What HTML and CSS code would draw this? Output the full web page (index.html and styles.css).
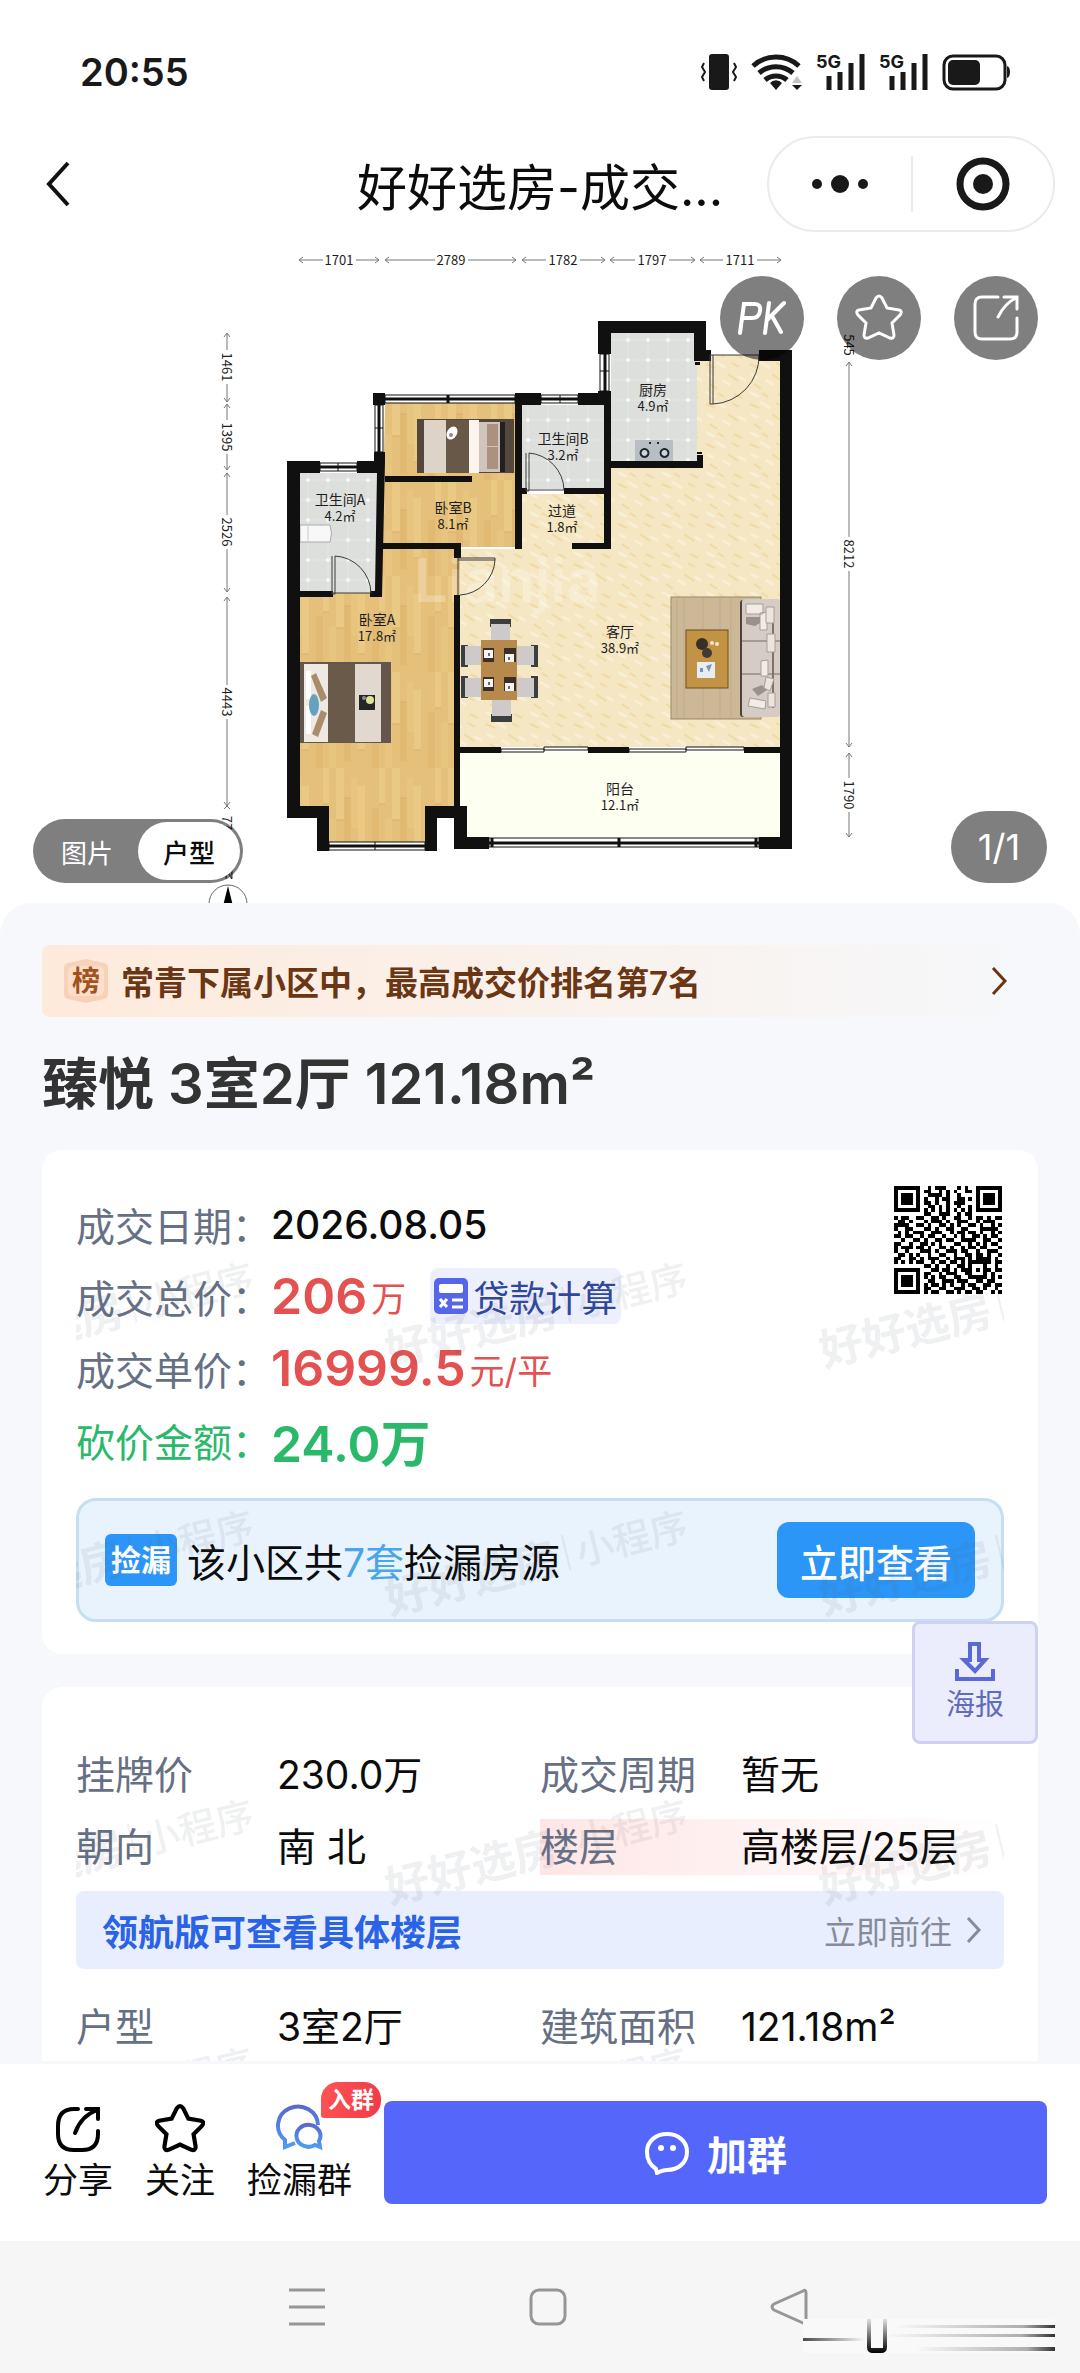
FILE: index.html
```html
<!DOCTYPE html>
<html lang="zh-CN">

<head>
    <meta charset="UTF-8">
    <meta name="viewport" content="width=device-width, initial-scale=1.0">
    <title>好好选房-成交详情</title>
    <link rel="stylesheet" href="styles.css">
</head>

<body>
    <div class="status-bar">
        <span class="clock">20:55</span>
        <div class="status-icons">
            <svg width="38" height="38" viewBox="0 0 38 38" fill="none" stroke="#191919" stroke-width="3">
                <rect x="9" y="1" width="20" height="36" rx="3" fill="#191919" stroke="none" />
                <rect x="15" y="31" width="8" height="3" fill="#fff" />
                <path d="M4 10l-2 4 3 5-3 5 2 4M34 10l2 4-3 5 3 5-2 4" stroke-width="2" />
            </svg>
            <svg width="52" height="38" viewBox="0 0 52 38" fill="none" stroke="#191919" stroke-width="5">
                <path d="M2 13a34 34 0 0 1 46 0M8 20a26 26 0 0 1 34 0M14 27a17 17 0 0 1 22 0" />
                <path d="M25 37l-6-7a8 8 0 0 1 12 0z" fill="#191919" stroke="none" />
                <path d="M46 23l5 7H41z" fill="#c4c4c4" stroke="none" />
                <path d="M46 37l5-5H41z" fill="#191919" stroke="none" />
            </svg>
            <svg class="signal" width="50" height="38" viewBox="0 0 50 38">
                <text x="0" y="15">5G</text>
                <path d="M13 23v14M24 19v18M35 10v27M46 1v36" />
            </svg>
            <svg class="signal" width="50" height="38" viewBox="0 0 50 38">
                <text x="0" y="15">5G</text>
                <path d="M13 23v14M24 19v18M35 10v27M46 1v36" />
            </svg>
            <svg width="68" height="38" viewBox="0 0 68 38">
                <rect x="2" y="3" width="61" height="33" rx="9" fill="none" stroke="#191919" stroke-width="3" />
                <rect x="6" y="7" width="32" height="25" rx="5" fill="#191919" />
                <path d="M65 13q3 1 3 6t-3 6z" fill="#191919" />
            </svg>
        </div>
    </div>

    <header class="navbar">
        <button class="back" aria-label="返回">
            <svg width="26" height="46" viewBox="0 0 26 46" fill="none" stroke="#111" stroke-width="4">
                <path d="M23 2L4 23l19 21" />
            </svg>
        </button>
        <h1 class="page-name">好好选房-成交...</h1>
        <div class="capsule">
            <button aria-label="更多">
                <svg width="60" height="24" viewBox="0 0 60 24" fill="#191919">
                    <circle cx="7" cy="12" r="5" />
                    <circle cx="30" cy="12" r="9" />
                    <circle cx="53" cy="12" r="5" />
                </svg>
            </button>
            <button aria-label="关闭">
                <svg width="54" height="54" viewBox="0 0 54 54">
                    <circle cx="27" cy="27" r="23" fill="none" stroke="#191919" stroke-width="7" />
                    <circle cx="27" cy="27" r="10" fill="#191919" />
                </svg>
            </button>
        </div>
    </header>

    <section class="gallery">
        <svg class="plan" viewBox="0 240 1080 663" role="img" aria-label="户型图">
            <defs>
                <pattern id="wood" width="56" height="96" patternUnits="userSpaceOnUse">
                    <rect width="56" height="96" fill="#e5c07b" />
                    <path d="M0 0h8v52H0zM22 18h7v60h-7zM43 0h6v36h-6z" fill="#eac985" />
                    <path d="M8 30h7v60H8zM36 40h7v56h-7z" fill="#e1b971" />
                    <path d="M15 10h7v50h-7zM49 50h7v46h-7z" fill="#e8c57f" />
                    <path d="M0 52h8M22 78h7M8 30h7M43 36h6" stroke="#d9b068" />
                </pattern>
                <pattern id="stone" width="44" height="40" patternUnits="userSpaceOnUse">
                    <rect width="44" height="40" fill="#f5e7c3" />
                    <path d="M2 4l9 4M24 14l10 7M6 24l7 5M30 34l8 4M28 3l7 4M14 33l6 4" stroke="#f1dba3" stroke-width="2" />
                    <path d="M12 2l10 6M34 16l8 5M2 32l9 5M18 20l8 5M3 14l7 4" stroke="#f9efd5" stroke-width="3" />
                </pattern>
                <pattern id="tile" x="610" y="342" width="20" height="20" patternUnits="userSpaceOnUse">
                    <rect width="20" height="20" fill="#dddfdd" />
                    <path d="M0 18h20M18 0v20" stroke="#e5e7e4" />
                    <circle cx="18" cy="18" r="2" fill="#f6f8f4" />
                </pattern>
            </defs>

            <!-- floors -->
            <path d="M515 494h96V361h169v386H460V549h55z" fill="url(#stone)" />
            <path d="M697 355h83v126h-83z" fill="url(#stone)" />
            <path d="M385 403h132v144h-57v259h-35v36h-96v-36h-32V549h85z" fill="url(#wood)" />
            <path d="M611 333h86v129h-86zM520 405h84v84h-84zM298 473h82v120h-82z" fill="url(#tile)" />
            <rect x="460" y="753" width="321" height="85" fill="#fdfff0" />
            <text class="plan-mark" x="414" y="602">Lianjia</text>

            <!-- bed in 卧室B -->
            <g>
                <rect x="417" y="419" width="97" height="54" fill="#54483c" />
                <rect x="424" y="420" width="22" height="53" fill="#ddd3c8" />
                <rect x="446" y="420" width="23" height="53" fill="#685848" />
                <rect x="469" y="420" width="10" height="53" fill="#fbf5ee" />
                <rect x="479" y="422" width="21" height="50" fill="#cfc5bc" />
                <rect x="487" y="424" width="11" height="22" fill="#ad9180" />
                <rect x="487" y="447" width="11" height="22" fill="#ad9180" />
                <rect x="500" y="422" width="5" height="50" fill="#23211f" />
                <ellipse cx="452" cy="433" rx="5" ry="7" fill="#fff" transform="rotate(30 452 433)" />
                <circle cx="451" cy="435" r="2" fill="#9d7f86" />
            </g>

            <!-- bed in 卧室A -->
            <g>
                <rect x="300" y="662" width="91" height="81" fill="#64564a" />
                <rect x="304" y="664" width="24" height="78" fill="#efe9e4" />
                <rect x="306" y="671" width="5" height="28" fill="#fff" />
                <rect x="306" y="706" width="5" height="28" fill="#fff" />
                <path d="M311 676l5-3 11 25-6 4zM321 710l6 3-9 24-6-3z" fill="#a98c69" />
                <ellipse cx="314" cy="705" rx="5" ry="11" fill="#64a2bd" />
                <rect x="328" y="664" width="27" height="78" fill="#6a5a49" />
                <rect x="355" y="664" width="26" height="78" fill="#e1d9cf" />
                <rect x="359" y="695" width="16" height="15" fill="#242526" />
                <circle cx="370" cy="700" r="4" fill="#dfe39a" />
                <circle cx="364" cy="698" r="2" fill="#8b8f90" />
            </g>

            <!-- dining set -->
            <g>
                <path d="M490 619h21v8h-21zM491 714h21v8h-21zM461 645h7v22h-7zM461 676h7v22h-7zM531 645h7v22h-7zM531 676h7v22h-7z" fill="#3c3e40" />
                <path d="M491 624h19v17h-19zM492 700h19v16h-19zM465 646h17v19h-17zM465 678h17v19h-17zM517 646h17v19h-17zM517 678h17v19h-17z" fill="#cfcaca" />
                <rect x="481" y="640" width="36" height="60" fill="#b78a4c" />
                <path d="M483 648h11v14h-11zM504 648h12v14h-12zM483 677h11v14h-11zM504 677h12v14h-12z" fill="#3c2f28" />
                <path d="M484 650h9v8h-9zM505 654h9v8h-9zM484 679h9v8h-9zM505 683h9v8h-9z" fill="#f6f4f2" />
                <path d="M488 653h2v3h-2zM508 657h2v3h-2zM488 682h2v3h-2zM508 686h2v3h-2z" fill="#6c6678" />
            </g>

            <!-- sofa and rug -->
            <g>
                <rect x="671" y="597" width="90" height="122" fill="#ccb796" stroke="#99876c" />
                <path d="M677 598v120M684 598v120M703 598v120M720 598v120M731 598v120" stroke="#c1ab88" />
                <rect x="686" y="630" width="42" height="58" fill="#c39345" stroke="#6d4d1c" />
                <circle cx="702" cy="644" r="6" fill="#37302a" />
                <circle cx="707" cy="653" r="5" fill="#413a33" />
                <circle cx="712" cy="643" r="2" fill="#f3e7c8" />
                <circle cx="717" cy="644" r="2" fill="#f3e7c8" />
                <rect x="697" y="662" width="18" height="16" fill="#e9edf2" />
                <path d="M706 666l6-2-3 8zM700 668h3v4h-3z" fill="#7694bd" />
                <rect x="740" y="600" width="6" height="117" rx="3" fill="#4c443c" />
                <rect x="742" y="599" width="38" height="118" rx="3" fill="#d6ccc6" />
                <path d="M742 641h38M742 674h38" stroke="#756a63" />
                <path d="M773 608v100" stroke="#7f746d" stroke-width="2" />
                <path d="M746 604h17v10h-17zM760 613l7-1v18h-7zM761 661l7-1v16h-7zM750 698l16 3-1 8-17-3z" fill="#f2ece7" stroke="#a79d95" />
                <path d="M746 617h14v6l-5 3-9-2zM752 689l10-4 5 5-9 6z" fill="#9a918c" />
                <path d="M766 607h8v16h-8zM767 634h8v18h-8zM766 677l8 2-4 12-6-3zM768 693h7v14h-7z" fill="#ece5df" stroke="#a79d95" />
            </g>

            <!-- fixtures -->
            <path d="M300 525h30q3 8 0 17h-30z" fill="#f8f8f9" stroke="#a9aab2" />
            <path d="M308 526v15" stroke="#c9cace" />
            <rect x="635" y="440" width="38" height="21" fill="#b7bec4" />
            <path d="M644 449a4 4 0 1 0 1 0zM664 449a4 4 0 1 0 1 0z" fill="#ced4d9" stroke="#20262b" stroke-width="2" />
            <path d="M649 442h2v2h-2zM657 442h2v2h-2z" fill="#20262b" />

            <!-- walls -->
            <g fill="#101010">
                <path d="M287 461h33v12h-20v333h29v45h-12v-33h-30z" />
                <path d="M357 461h17v-9h11v9l-3 136h-12v-6h5l2-118h-20z" />
                <path d="M300 591h33v6h-33zM373 393h12v12h-12zM385 476h87v6h-87z" />
                <path d="M515 393h26v12h-19v144h-7zM578 393h20v-2h13v70h86v-6h6v13h-92v81h-39v-6h32v-49h-40v-6h40v-83h-26z" />
                <path d="M515 488h12v6h-12zM381 543h80v15h-7v-9h-73z" />
                <path d="M598 321h108v29h5v11h-17v-28h-83v21h-13zM759 350h33v499h-33v-12h21V361h-21z" />
                <path d="M454 595h6v152h41v6h-41v53h7v31h22v12h-35v-31h-17v33h-12v-45h29zM588 747h41v6h-41zM744 747h36v6h-36z" />
                <path d="M695 362h5v3h-5zM697 452h5v2h-5z" />
            </g>

            <!-- windows -->
            <g fill="#fff" stroke="#101010">
                <path d="M385 395h130v8H385zM541 395h37v8h-37zM320 463h37v8h-37zM375 405h8v47h-8zM600 354h9v37h-9zM329 842h96v8h-96zM489 838h270v9H489z" />
                <path d="M385 399h130M541 399h37M320 467h37M379 405v47M605 354v37M329 846h96M489 843h270" stroke-width="3" />
                <path d="M448 395v8M619 838v9M492 838v9M756 838v9" stroke-width="3" />
                <path d="M560 395v8M338 463v8M375 428h8M600 371h9M375 842v8" />
                <path d="M501 749h43v3h-43zM544 747h44v3h-44zM629 749h57v3h-57zM686 747h58v3h-58z" />
            </g>

            <!-- doors -->
            <g fill="none" stroke="#3b3b3b">
                <path d="M710 355h49M710 355v49h3v-49M713 404a48 48 0 0 0 46-49" />
                <path d="M527 490h37M526 453v38h3v-38M529 453a38 38 0 0 1 35 37" />
                <path d="M332 593h39M332 556v38h3v-38M335 556a38 38 0 0 1 36 37" />
                <path d="M458 558v37M458 558h37v2h-37M495 560a37 37 0 0 1-35 35" />
            </g>

            <!-- dimension lines -->
            <g class="dim-lines">
                <path d="M299 260h24M356 260h23M385 260h50M468 260h48M522 260h24M580 260h25M610 260h25M669 260h26M700 260h23M757 260h24" />
                <path d="M303 257l-4 3 4 3M375 257l4 3-4 3M389 257l-4 3 4 3M512 257l4 3-4 3M526 257l-4 3 4 3M601 257l4 3-4 3M614 257l-4 3 4 3M691 257l4 3-4 3M704 257l-4 3 4 3M777 257l4 3-4 3" />
                <path d="M227 333v17M227 384v18M227 404v16M227 454v16M227 473v42M227 549v43M227 597v88M227 719v87" />
                <path d="M224 337l3-4 3 4M224 398l3 4 3-4M224 408l3-4 3 4M224 466l3 4 3-4M224 477l3-4 3 4M224 588l3 4 3-4M224 601l3-4 3 4M224 802l3 4 3-4M224 809l3-3 3 3" />
                <path d="M849 362v175M849 571v176M849 753v25M849 812v25" />
                <path d="M846 366l3-4 3 4M846 743l3 4 3-4M846 757l3-4 3 4M846 833l3 4 3-4" />
            </g>
            <g class="dim-text">
                <text x="339" y="265">1701</text>
                <text x="451" y="265">2789</text>
                <text x="563" y="265">1782</text>
                <text x="652" y="265">1797</text>
                <text x="740" y="265">1711</text>
                <text transform="translate(222 367) rotate(90)">1461</text>
                <text transform="translate(222 437) rotate(90)">1395</text>
                <text transform="translate(222 532) rotate(90)">2526</text>
                <text transform="translate(222 702) rotate(90)">4443</text>
                <text transform="translate(222 823) rotate(90)">77</text>
                <text transform="translate(844 345) rotate(90)">545</text>
                <text transform="translate(844 554) rotate(90)">8212</text>
                <text transform="translate(844 795) rotate(90)">1790</text>
                <text x="229" y="879">N</text>
            </g>

            <g class="room-text">
                <text x="340" y="505">卫生间A</text>
                <text class="area" x="340" y="521">4.2㎡</text>
                <text x="453" y="513">卧室B</text>
                <text class="area" x="453" y="529">8.1㎡</text>
                <text x="563" y="444">卫生间B</text>
                <text class="area" x="563" y="460">3.2㎡</text>
                <text x="562" y="516">过道</text>
                <text class="area" x="562" y="532">1.8㎡</text>
                <text x="653" y="395">厨房</text>
                <text class="area" x="653" y="411">4.9㎡</text>
                <text x="377" y="625">卧室A</text>
                <text class="area" x="377" y="641">17.8㎡</text>
                <text x="620" y="637">客厅</text>
                <text class="area" x="620" y="653">38.9㎡</text>
                <text x="620" y="794">阳台</text>
                <text class="area" x="620" y="810">12.1㎡</text>
            </g>

            <circle cx="228" cy="904" r="19" fill="none" stroke="#666" />
            <path d="M228 886l5 20h-10z" />
        </svg>

        <div class="gallery-tools">
            <button aria-label="PK">
                <svg class="pk" width="50" height="36" viewBox="0 0 50 36">
                    <path d="M3 33L7 4h11q6 0 5 7t-8 7H6M32 3l-4 30M47 3L31 19M35 16l9 16" />
                </svg>
            </button>
            <button aria-label="收藏">
                <svg width="48" height="48" viewBox="0 0 48 48">
                    <path d="M21 4q3-4 6 0l5 10 12 2q4 1 1 5l-8 8 2 12q0 4-4 3l-11-5-11 5q-4 1-4-3l2-12-8-8q-3-4 1-5l12-2z" />
                </svg>
            </button>
            <button aria-label="转发">
                <svg width="48" height="48" viewBox="0 0 48 48">
                    <path d="M26 3H10q-7 0-7 7v28q0 7 7 7h28q7 0 7-7V24M32 3h13v12M44 4Q33 9 26 23" />
                </svg>
            </button>
        </div>

        <div class="switch">
            <button>图片</button>
            <button class="active">户型</button>
        </div>
        <span class="counter">1/1</span>
    </section>

    <main class="sheet">
        <a href="#rank" class="rank">
            <svg width="46" height="44" viewBox="0 0 46 44">
                <path d="M23 0l18 4q4 1 4 5v26q0 4-4 5l-18 4-18-4q-4-1-4-5V9q0-4 4-5z" fill="#f7d2b9" />
                <rect x="5" y="7" width="36" height="30" rx="6" fill="#fcdfca" />
                <text x="23" y="32" text-anchor="middle">榜</text>
            </svg>
            <span class="rank-text">常青下属小区中，最高成交价排名第7名</span>
            <svg width="18" height="30" viewBox="0 0 18 30" fill="none" stroke="#6a3614" stroke-width="3">
                <path d="M3 2l12 13L3 28" />
            </svg>
        </a>

        <h2 class="title">臻悦 3室2厅 121.18m²</h2>

        <section class="card deal">
            <dl class="deal-list">
                <div>
                    <dt>成交日期：</dt>
                    <dd class="date">2026.08.05</dd>
                </div>
                <div>
                    <dt>成交总价：</dt>
                    <dd class="price">206<small>万</small></dd>
                    <dd>
                        <button class="loan">
                            <svg width="34" height="36" viewBox="0 0 34 36">
                                <rect width="34" height="36" rx="5" fill="#5567e8" />
                                <rect x="5" y="6" width="24" height="9" rx="2" fill="#fff" />
                                <path d="M6 21l7 8M13 21l-7 8M18 22h11M18 29h11" stroke="#fff" stroke-width="3" />
                            </svg>
                            贷款计算
                        </button>
                    </dd>
                </div>
                <div>
                    <dt>成交单价：</dt>
                    <dd class="price">16999.5<small>元/平</small></dd>
                </div>
                <div class="cut">
                    <dt>砍价金额：</dt>
                    <dd class="price">24.0万</dd>
                </div>
            </dl>
            <svg class="qr" viewBox="0 0 29 29" role="img" aria-label="小程序码"></svg>

            <div class="promo">
                <span class="promo-tag">捡漏</span>
                <p>该小区共<em>7套</em>捡漏房源</p>
                <button>立即查看</button>
            </div>

            <svg class="watermark" aria-hidden="true">
                <defs>
                    <pattern id="mark" x="300" y="0" width="434" height="248" patternUnits="userSpaceOnUse">
                        <g transform="translate(14 184) rotate(-14)">
                            <text x="0" y="0" class="mark-name">好好选房</text>
                            <path d="M186 -36v36" stroke="#56606c" stroke-width="2" />
                            <text x="196" y="-2" class="mark-sub">小程序</text>
                        </g>
                    </pattern>
                </defs>
                <rect width="100%" height="100%" fill="url(#mark)" />
            </svg>
        </section>

        <section class="card facts">
            <button class="poster">
                <svg width="42" height="42" viewBox="0 0 42 42" fill="none" stroke="#5b68d8" stroke-width="4">
                    <path d="M16 4h9v16h6l-10 11-11-11h6z" />
                    <path d="M3 29v10h36V29" />
                </svg>
                海报
            </button>

            <dl class="fact-grid">
                <div>
                    <dt>挂牌价</dt>
                    <dd>230.0万</dd>
                </div>
                <div>
                    <dt>成交周期</dt>
                    <dd>暂无</dd>
                </div>
                <div>
                    <dt>朝向</dt>
                    <dd>南 北</dd>
                </div>
                <div class="floor">
                    <dt>楼层</dt>
                    <dd>高楼层/25层</dd>
                </div>
            </dl>

            <a href="#upgrade" class="upgrade">
                <strong>领航版可查看具体楼层</strong>
                <span>立即前往</span>
                <svg width="16" height="28" viewBox="0 0 16 28" fill="none" stroke="#858b99" stroke-width="3">
                    <path d="M2 2l11 12L2 26" />
                </svg>
            </a>

            <dl class="fact-grid">
                <div>
                    <dt>户型</dt>
                    <dd>3室2厅</dd>
                </div>
                <div>
                    <dt>建筑面积</dt>
                    <dd>121.18m²</dd>
                </div>
            </dl>

            <svg class="watermark" aria-hidden="true">
                <rect width="100%" height="100%" fill="url(#mark)" />
            </svg>
        </section>
    </main>

    <footer class="action-bar">
        <button class="action">
            <svg width="48" height="50" viewBox="0 0 48 50" fill="none" stroke="#000" stroke-width="4" stroke-linecap="round">
                <path d="M24 5h-4Q4 5 4 22v8q0 16 16 16h8q16 0 16-16v-3M32 5h12v10M43 6Q27 12 21 29" />
            </svg>
            分享
        </button>
        <button class="action">
            <svg width="50" height="50" viewBox="0 0 48 48" fill="none" stroke="#000" stroke-width="4">
                <path d="M21 4q3-4 6 0l5 10 12 2q4 1 1 5l-8 8 2 12q0 4-4 3l-11-5-11 5q-4 1-4-3l2-12-8-8q-3-4 1-5l12-2z" />
            </svg>
            关注
        </button>
        <button class="action">
            <svg width="50" height="50" viewBox="0 0 50 50" fill="none" stroke="url(#chat)" stroke-width="4">
                <defs>
                    <linearGradient id="chat" x1="0" y1="0" x2="0" y2="1">
                        <stop offset="0" stop-color="#5a69cf" />
                        <stop offset="1" stop-color="#4f9bf0" />
                    </linearGradient>
                </defs>
                <path d="M43 21A20 19 0 1 0 10 36v7l10-4" />
                <path d="M45 43l-1-6a12 11 0 1 0-4 4z" />
            </svg>
            捡漏群
            <span class="badge">入群</span>
        </button>
        <button class="join">
            <svg width="46" height="44" viewBox="0 0 46 44" fill="none" stroke="#fff" stroke-width="4">
                <path d="M12 38q-9-6-9-17C3 10 12 3 23 3s20 7 20 18-9 18-20 18q-4 0-10 3z" />
                <circle cx="17" cy="17" r="3" fill="#fff" stroke="none" />
                <circle cx="29" cy="17" r="3" fill="#fff" stroke="none" />
            </svg>
            加群
        </button>
    </footer>

    <nav class="system-nav">
        <button aria-label="最近任务">
            <svg width="38" height="38" viewBox="0 0 38 38">
                <path d="M1 2h36M1 19h36M1 36h36" />
            </svg>
        </button>
        <button aria-label="主页">
            <svg width="38" height="38" viewBox="0 0 38 38">
                <rect x="2" y="2" width="34" height="34" rx="8" />
            </svg>
        </button>
        <button aria-label="返回上一级">
            <svg width="38" height="38" viewBox="0 0 38 38">
                <path d="M33 3Q36 1 36 5v28q0 4-3 2L4 22q-4-3 0-6z" />
            </svg>
        </button>
        <svg class="smudge" width="252" height="34" viewBox="0 0 252 34" aria-hidden="true">
            <defs>
                <linearGradient id="fadeRight">
                    <stop offset="0" stop-color="#000" stop-opacity="0" />
                    <stop offset=".8" stop-color="#000" stop-opacity=".3" />
                    <stop offset="1" stop-color="#000" stop-opacity=".8" />
                </linearGradient>
                <linearGradient id="fadeLeft">
                    <stop offset="0" stop-color="#000" stop-opacity=".7" />
                    <stop offset="1" stop-color="#000" stop-opacity="0" />
                </linearGradient>
                <linearGradient id="fadeDown" x1="0" y1="0" x2="0" y2="1">
                    <stop offset="0" stop-color="#000" stop-opacity=".1" />
                    <stop offset="1" stop-color="#000" />
                </linearGradient>
            </defs>
            <rect width="252" height="34" fill="#f9f9f9" />
            <rect y="19" width="62" height="3" fill="url(#fadeLeft)" />
            <rect x="92" y="6" width="160" height="3" fill="url(#fadeRight)" />
            <rect x="82" y="15" width="170" height="3" fill="url(#fadeRight)" />
            <rect x="112" y="28" width="140" height="4" fill="url(#fadeRight)" />
            <path d="M64 0h4v29h12V0h4v28q0 6-6 6h-8q-6 0-6-6z" fill="url(#fadeDown)" />
        </svg>
    </nav>

    <script src="script.js"></script>
</body>

</html>
```
FILE: styles.css
```css
* {
    margin: 0;
    padding: 0;
    box-sizing: border-box;
}

body {
    background: #fff;
    color: #0c0c0c;
    font-family: Inter, "Noto Sans CJK SC", sans-serif;
    font-size: 39px;
}

button {
    background: none;
    border: 0;
    color: inherit;
    cursor: pointer;
    font: inherit;
}

a {
    color: inherit;
    text-decoration: none;
}

svg {
    display: block;
    flex-shrink: 0;
}

/* status bar */
.status-bar {
    align-items: center;
    display: flex;
    height: 128px;
    justify-content: space-between;
    padding: 16px 70px 0 80px;
}

.clock {
    color: #191919;
    font-size: 38px;
    font-weight: 600;
}

.status-icons {
    display: flex;
    gap: 13px;
}

.signal {
    overflow: visible;
}

.signal text {
    fill: #191919;
    font-size: 18px;
    font-weight: 700;
}

.signal path {
    stroke: #191919;
    stroke-width: 5;
}

/* top navigation */
.navbar {
    align-items: center;
    display: grid;
    grid-template-columns: 1fr auto 1fr;
    height: 112px;
    padding: 0 25px;
}

.back {
    justify-self: start;
    padding-left: 20px;
}

.page-name {
    color: #0c0c0c;
    font-size: 50px;
    font-weight: 400;
}

.capsule {
    border: 2px solid #ebebeb;
    border-radius: 48px;
    display: grid;
    grid-template-columns: 1fr 1fr;
    height: 96px;
    justify-self: end;
    padding: 18px 0;
    width: 288px;
}

.capsule button {
    display: grid;
    place-items: center;
}

.capsule button+button {
    border-left: 2px solid #ebebeb;
}

/* gallery */
.gallery {
    position: relative;
}

.plan {
    width: 100%;
}

.plan-mark {
    fill: #fff;
    font-size: 60px;
    font-weight: 600;
    opacity: .25;
}

.dim-lines {
    fill: none;
    stroke: #777;
}

.dim-text,
.room-text {
    fill: #1d1d1d;
    font-family: "Noto Sans CJK SC", sans-serif;
    font-size: 13px;
    text-anchor: middle;
}

.room-text {
    font-size: 14px;
}

.room-text .area {
    font-size: 13px;
}

.gallery-tools {
    display: flex;
    gap: 33px;
    position: absolute;
    right: 42px;
    top: 36px;
}

.gallery-tools button {
    background: rgba(0, 0, 0, .5);
    border-radius: 50%;
    display: grid;
    height: 84px;
    place-items: center;
    width: 84px;
}

.gallery-tools svg {
    fill: none;
    stroke: #fff;
    stroke-linecap: round;
    stroke-width: 3;
}

.gallery-tools .pk {
    stroke-width: 4;
}

.switch {
    background: rgba(0, 0, 0, .5);
    border-radius: 32px;
    bottom: 20px;
    color: #fff;
    display: flex;
    font-size: 26px;
    height: 64px;
    left: 33px;
    padding: 3px;
    position: absolute;
}

.switch button {
    border-radius: 29px;
    width: 102px;
}

.switch .active {
    background: #fff;
    color: #0c0c0c;
    font-weight: 500;
}

.counter {
    background: rgba(0, 0, 0, .5);
    border-radius: 36px;
    bottom: 20px;
    color: #fff;
    font-size: 36px;
    line-height: 72px;
    position: absolute;
    right: 33px;
    text-align: center;
    width: 96px;
}

/* sheet */
.sheet {
    background: #f6f8fb;
    border-radius: 32px 32px 0 0;
    padding: 42px 42px 3px;
}

.rank {
    align-items: center;
    background: linear-gradient(90deg, #feeadb, #f6f8fb);
    border-radius: 8px;
    color: #6a3614;
    display: flex;
    font-size: 33px;
    font-weight: 600;
    gap: 12px;
    height: 72px;
    padding: 0 30px 0 21px;
}

.rank svg text {
    fill: #a3521f;
    font-size: 28px;
    font-weight: 700;
}

.rank-text {
    flex: 1;
}

.title {
    color: #333;
    font-size: 56px;
    font-weight: 600;
    line-height: 72px;
    margin: 31px 0 30px;
}

.card {
    background: #fff;
    border-radius: 20px;
    padding: 38px 34px 32px;
    position: relative;
}

dt {
    color: #667085;
}

.deal {
    margin-bottom: 33px;
}

.deal-list>div {
    align-items: center;
    display: flex;
    height: 72px;
}

.deal-list dt {
    width: 195px;
}

.date {
    font-weight: 500;
}

.price {
    align-items: center;
    color: #e35151;
    display: flex;
    font-size: 50px;
    font-weight: 600;
    gap: 4px;
}

.price small {
    font-size: 35px;
    font-weight: 400;
}

.cut dt,
.cut .price {
    color: #2ab96a;
}

.loan {
    align-items: center;
    background: #edf0fc;
    border-radius: 8px;
    color: #2f489c;
    display: flex;
    font-size: 36px;
    gap: 5px;
    height: 56px;
    margin-left: 24px;
    padding: 0 4px;
}

.qr {
    height: 108px;
    position: absolute;
    right: 36px;
    top: 36px;
    width: 108px;
}

.promo {
    align-items: center;
    background: #e8f3fe;
    border: 3px solid #c5dff1;
    border-radius: 20px;
    display: flex;
    gap: 10px;
    height: 124px;
    margin-top: 22px;
    padding: 0 26px;
}

.promo-tag {
    background: #2b96f8;
    border-radius: 6px;
    color: #fff;
    font-size: 30px;
    font-weight: 700;
    line-height: 52px;
    padding: 0 6px;
}

.promo p {
    flex: 1;
}

.promo em {
    color: #4aa5ea;
    font-style: normal;
}

.promo button {
    background: #2b96f8;
    border-radius: 12px;
    color: #fff;
    font-size: 38px;
    font-weight: 500;
    height: 76px;
    padding: 0 23px;
}

/* sits on top of everything in the card */
.watermark {
    height: calc(100% - 66px);
    left: 34px;
    opacity: .09;
    pointer-events: none;
    position: absolute;
    top: 33px;
    width: calc(100% - 68px);
}

.mark-name {
    fill: #56606c;
    font-size: 44px;
    font-weight: 700;
}

.mark-sub {
    fill: #56606c;
    font-size: 38px;
    font-weight: 500;
}

/* listing facts */
.facts {
    border-radius: 20px 20px 0 0;
    padding: 52px 34px 0;
}

.facts .watermark {
    height: calc(100% - 33px);
}

.poster {
    align-items: center;
    background: #ecedfc;
    border: 3px solid #cfd1f4;
    border-radius: 8px;
    color: #5f6bbd;
    display: flex;
    flex-direction: column;
    font-size: 29px;
    gap: 2px;
    height: 123px;
    justify-content: center;
    line-height: 42px;
    position: absolute;
    right: 0;
    top: -66px;
    width: 126px;
    z-index: 1;
}

.fact-grid {
    display: grid;
    grid-template-columns: 1fr 1fr;
    line-height: 56px;
    row-gap: 16px;
    padding: 8px 0;
}

.fact-grid>div {
    display: flex;
}

.fact-grid dt {
    width: 201px;
}

.floor {
    background: linear-gradient(90deg, #ffe6e6, #fff);
}

.upgrade {
    align-items: center;
    background: #e8eefe;
    border-radius: 8px;
    color: #858b99;
    display: flex;
    font-size: 32px;
    gap: 14px;
    height: 78px;
    margin: 8px 0 22px;
    padding: 0 22px 0 26px;
}

.upgrade strong {
    color: #2b63e6;
    flex: 1;
    font-size: 36px;
    font-weight: 700;
}

.upgrade+.fact-grid {
    padding-bottom: 6px;
}

/* bottom bar */
.action-bar {
    align-items: center;
    display: flex;
    gap: 32px;
    height: 177px;
    padding: 0 33px 0 43px;
}

.action {
    align-items: center;
    display: flex;
    flex-direction: column;
    font-size: 35px;
    gap: 4px;
    line-height: 44px;
    position: relative;
    white-space: nowrap;
}

.badge {
    background: linear-gradient(100deg, #ff5454, #ef3a48);
    border-radius: 17px 17px 17px 3px;
    color: #fff;
    font-size: 23px;
    font-weight: 600;
    line-height: 36px;
    padding: 0 7px;
    position: absolute;
    right: -29px;
    top: -22px;
}

.join {
    align-items: center;
    background: #5567fb;
    border-radius: 8px;
    color: #fff;
    display: flex;
    flex: 1;
    font-size: 40px;
    font-weight: 700;
    gap: 17px;
    height: 103px;
    justify-content: center;
}

/* phone navigation */
.system-nav {
    align-items: center;
    background: #f6f6f6;
    display: flex;
    gap: 203px;
    height: 132px;
    justify-content: center;
    padding-left: 16px;
    position: relative;
}

.system-nav button svg {
    fill: none;
    stroke: #969696;
    stroke-width: 3;
}

.smudge {
    bottom: 20px;
    position: absolute;
    right: 25px;
}
```
FILE: script.js
```js
// one string per row of the code, # is a dark module
const rows = [
    '#######..#.###...#.#..#######',
    '#.....#.##..#.#.#..##.#.....#',
    '#.###.#..####.#..#....#.###.#',
    '#.###.#.#..#.##..##.#.#.###.#',
    '#.###.#.##.#..#.###...#.###.#',
    '#.....#..##.#.#..#..#.#.....#',
    '#######.#.#.#.#.#.#.#.#######',
    '........##..###..#.##........',
    '#.##..##..##.#..##..#.##.#.##',
    '.##.#...#.###.#..###..#.###..',
    '####..##.#..##.#.#..##.#..#.#',
    '#..##...##.#..##..##...#####.',
    '.#.#.###..###..#.##.##.#..#.#',
    '##.##..#.##..#..#.#..##.#.##.',
    '..#..##.#..##.##..####..##..#',
    '##..#..##.#.#...##..#.#.#.##.',
    '#.###.##.#..##.#..#.##.##...#',
    '#..#...###.#..###.##..#..###.',
    '.##.#.#..#..##..#..##.##.#..#',
    '##..##.#.###..#.###.#.####.#.',
    '#.#.#.##..#.##.##.#.######.##',
    '........##.#..#..##.#...#..#.',
    '#######...##.##.#.###.#.##.##',
    '#.....#.##..#.###..##...#.#..',
    '#.###.#.#.#.##..##..#####.#.#',
    '#.###.#..##..###.###..##.##..',
    '#.###.#.#.##.#.#..#.##..##.##',
    '#.....#.##..##..###..##.#..#.',
    '#######.#.##..##.#.##.##..#.#'
];

let d = '';
rows.forEach((row, y) => {
    [...row].forEach((cell, x) => {
        if (cell === '#') d += `M${x} ${y}h1v1h-1z`;
    });
});

const path = document.createElementNS('http://www.w3.org/2000/svg', 'path');
path.setAttribute('d', d);
path.setAttribute('shape-rendering', 'crispEdges');
document.querySelector('.qr').appendChild(path);
```
